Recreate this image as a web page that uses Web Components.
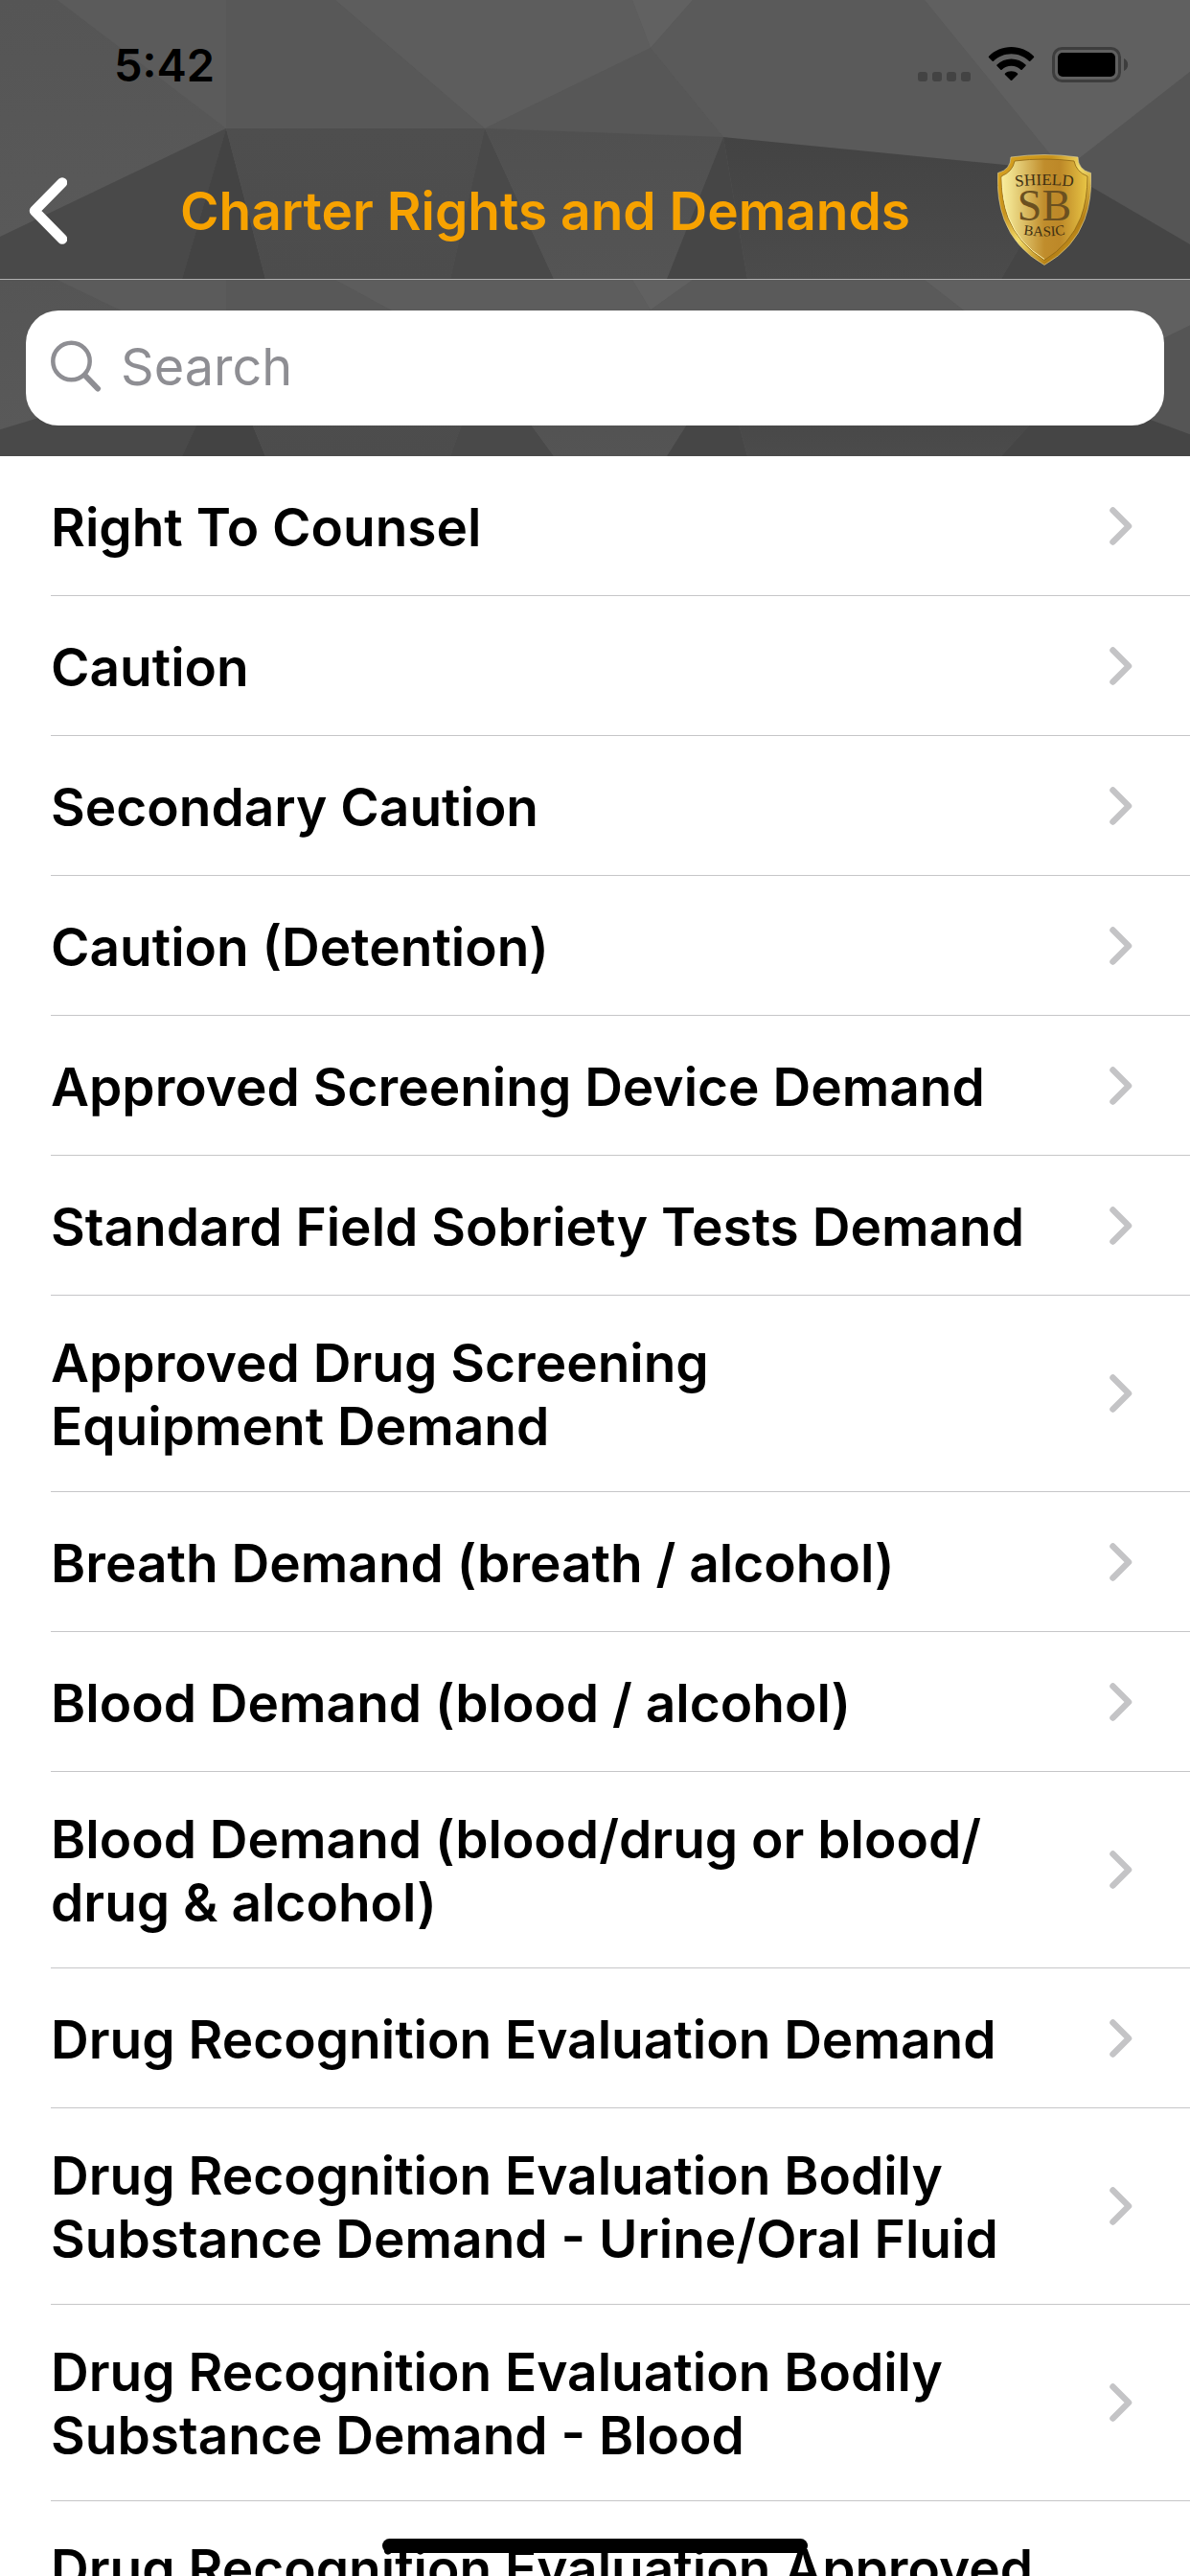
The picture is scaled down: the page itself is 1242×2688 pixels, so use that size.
<!DOCTYPE html>
<html lang="en">
<head>
<meta charset="utf-8">
<meta name="viewport" content="width=device-width, initial-scale=1">
<title>Charter Rights and Demands</title>
<style>
    html, body {
        margin: 0;
        height: 100%;
    }
    body {
        background: #fff;
        color: #000;
        font-family: Inter, "Liberation Sans", sans-serif;
        overflow: hidden;
        --accent: #f7a200;
        --grey: #8e8e93;
        --line: #c6c6c8;
        --text-size: 55px;
    }
</style>
</head>
<body>

<app-screen>
    <status-bar slot="header" time="5:42"></status-bar>
    <nav-bar slot="header">Charter Rights and Demands</nav-bar>
    <search-bar slot="search"></search-bar>
    <demand-list></demand-list>
</app-screen>

<script>
// --- Data ---
// A newline marks where a long title wraps
const DEMANDS = [
    'Right To Counsel',
    'Caution',
    'Secondary Caution',
    'Caution (Detention)',
    'Approved Screening Device Demand',
    'Standard Field Sobriety Tests Demand',
    'Approved Drug Screening\nEquipment Demand',
    'Breath Demand (breath / alcohol)',
    'Blood Demand (blood / alcohol)',
    'Blood Demand (blood/drug or blood/\ndrug & alcohol)',
    'Drug Recognition Evaluation Demand',
    'Drug Recognition Evaluation Bodily\nSubstance Demand - Urine/Oral Fluid',
    'Drug Recognition Evaluation Bodily\nSubstance Demand - Blood',
    'Drug Recognition Evaluation Approved\n\u00a0'
];

// --- Web Component: PolyPanel (faceted grey panel behind its content) ---
class PolyPanel extends HTMLElement {
    constructor() {
        super();
        this.attachShadow({ mode: 'open' });
    }

    connectedCallback() {
        this.shadowRoot.innerHTML = `
            <style>
                :host {
                    display: block;
                    position: relative;
                    background: #585858;
                }
                svg {
                    position: absolute;
                    inset: 0;
                    width: 100%;
                    height: 100%;
                }
                .content {
                    position: relative;
                }
            </style>
            <svg viewBox="0 0 1242 291" preserveAspectRatio="none" aria-hidden="true">
                <defs>
                    <linearGradient id="left" x1="0" y1="0" x2="0" y2="1">
                        <stop offset="0" stop-color="#555"/>
                        <stop offset="1" stop-color="#595959"/>
                    </linearGradient>
                    <linearGradient id="low" x1="0" y1="0" x2="0" y2="1">
                        <stop offset="0" stop-color="#4e4e4e"/>
                        <stop offset="1" stop-color="#4c4c4c"/>
                    </linearGradient>
                    <linearGradient id="mid" x1="0" y1="0" x2="0" y2="1">
                        <stop offset="0" stop-color="#505050"/>
                        <stop offset="1" stop-color="#545454"/>
                    </linearGradient>
                    <linearGradient id="right" x1="0" y1="0" x2="0" y2="1">
                        <stop offset="0" stop-color="#434343"/>
                        <stop offset="1" stop-color="#4b4b4b"/>
                    </linearGradient>
                </defs>
                <path fill="url(#left)" d="M0 0H60L236 134 0 247z"/>
                <path fill="#5b5b5b" d="M60 0H236V134z"/>
                <path fill="#585858" d="M236 0H350L506 134H236z"/>
                <path fill="#5d5d5d" d="M350 0H660L679 50 506 134z"/>
                <path fill="#616161" d="M660 0H723L679 50z"/>
                <path fill="#575757" d="M506 134 679 50 755 143z"/>
                <path fill="#5a5a5a" d="M723 0H965L1110 178 755 143 679 50z"/>
                <path fill="#606060" d="M965 0H1242V75L1110 178z"/>
                <path fill="#555" d="M1242 75V255L1110 178z"/>
                <path fill="#494949" d="M0 247 236 134 190 291H0z"/>
                <path fill="#434343" d="M236 134 277 291H190z"/>
                <path fill="url(#low)" d="M236 134H506L470 291H277z"/>
                <path fill="#494949" d="M506 134 578 291H470z"/>
                <path fill="url(#mid)" d="M506 134 755 143 696 291H578z"/>
                <path fill="#464646" d="M755 143 780 291H696z"/>
                <path fill="url(#right)" d="M755 143 1110 178 1045 291H780z"/>
                <path fill="#454545" d="M1110 178 1242 255V291H1045z"/>
            </svg>
            <div class="content"><slot></slot></div>
        `;
    }
}

// --- Web Component: AppScreen ---
class AppScreen extends HTMLElement {
    constructor() {
        super();
        this.attachShadow({ mode: 'open' });
    }

    connectedCallback() {
        this.shadowRoot.innerHTML = `
            <style>
                :host {
                    display: flex;
                    flex-direction: column;
                    height: 100vh;
                    overflow: hidden;
                }
                poly-panel {
                    flex: none;
                }
                .nav {
                    border-bottom: 1px solid #b0b0b0;
                }
                main {
                    flex: 1;
                    min-height: 0;
                    overflow: hidden;
                }
                .home {
                    position: fixed;
                    left: 50%;
                    bottom: 24px;
                    width: 444px;
                    height: 15px;
                    margin-left: -222px;
                    border-radius: 8px;
                    background: #000;
                }
            </style>
            <poly-panel class="nav"><slot name="header"></slot></poly-panel>
            <poly-panel><slot name="search"></slot></poly-panel>
            <main><slot></slot></main>
            <div class="home"></div>
        `;
    }
}

// --- Web Component: StatusBar ---
class StatusBar extends HTMLElement {
    constructor() {
        super();
        this.attachShadow({ mode: 'open' });
    }

    connectedCallback() {
        this.shadowRoot.innerHTML = `
            <style>
                :host {
                    display: flex;
                    align-items: center;
                    justify-content: space-between;
                    height: 136px;
                    padding: 0 64px 0 119px;
                }
                time {
                    font-size: 47px;
                    line-height: 56px;
                    font-weight: 600;
                }
                svg {
                    display: block;
                }
            </style>
            <time>${this.getAttribute('time')}</time>
            <svg width="220" height="38" viewBox="0 0 220 38" aria-hidden="true">
                <g fill="#434343">
                    <rect x="0" y="26" width="10" height="10" rx="3"/>
                    <rect x="15" y="26" width="10" height="10" rx="3"/>
                    <rect x="30" y="26" width="10" height="10" rx="3"/>
                    <rect x="45" y="26" width="10" height="10" rx="3"/>
                </g>
                <g transform="translate(74 0)">
                    <path d="M23.500 0C14.500 0 6 3.500 0 9.800q-.6.700 0 1.300L3.700 14.800q.6.600 1.300 0C10 10 16.500 7.300 23.500 7.300S37 10 42 14.800q.7.600 1.300 0L47 11.100q.6-.6 0-1.300C41 3.500 32.500 0 23.500 0z"/>
                    <path d="M23.500 12.500c-5.700 0-11 2.200-15 6q-.7.700 0 1.300l3.800 3.900q.7.600 1.300 0c2.700-2.500 6.200-3.900 9.900-3.900s7.200 1.400 9.900 3.900q.6.600 1.300 0l3.800-3.900q.7-.6 0-1.300c-4-3.800-9.300-6-15-6z"/>
                    <path d="M23.500 25.200c-2.500 0-4.700.9-6.500 2.300q-.7.700 0 1.400l5.800 5.800q.7.700 1.400 0l5.800-5.800q.7-.7 0-1.400c-1.800-1.400-4-2.300-6.500-2.300z"/>
                </g>
                <rect x="141.500" y="1.500" width="69" height="34" rx="9" fill="none" stroke="#3d3d3d" stroke-width="3"/>
                <rect x="146" y="6" width="60" height="25" rx="5"/>
                <path fill="#3d3d3d" d="M215 12c2.500 1 4.200 3.500 4.200 6.500s-1.700 5.500-4.200 6.500z"/>
            </svg>
        `;
    }
}

// --- Web Component: ShieldLogo ---
class ShieldLogo extends HTMLElement {
    constructor() {
        super();
        this.attachShadow({ mode: 'open' });
    }

    connectedCallback() {
        this.shadowRoot.innerHTML = `
            <style>
                :host {
                    display: block;
                    width: 98px;
                    height: 118px;
                }
                svg {
                    display: block;
                }
                text {
                    font-family: "Liberation Serif", serif;
                    fill: #3f3012;
                    text-anchor: middle;
                }
                .initials {
                    fill: #6b5020;
                }
            </style>
            <svg width="98" height="116" viewBox="0 0 98 116" role="img" aria-label="Shield Basic">
                <defs>
                    <linearGradient id="rim" x1="0" y1="0" x2="1" y2="1">
                        <stop offset="0" stop-color="#d9a520"/>
                        <stop offset=".3" stop-color="#c8921c"/>
                        <stop offset=".5" stop-color="#f3dc6a"/>
                        <stop offset=".75" stop-color="#b57f14"/>
                        <stop offset="1" stop-color="#e9c53f"/>
                    </linearGradient>
                    <linearGradient id="face" x1="0" y1="0" x2="1" y2="0">
                        <stop offset="0" stop-color="#f9ee9c"/>
                        <stop offset=".12" stop-color="#eddc88"/>
                        <stop offset=".5" stop-color="#c08d2c"/>
                        <stop offset=".68" stop-color="#bd8828"/>
                        <stop offset="1" stop-color="#e8c545"/>
                    </linearGradient>
                    <path id="arcTop" d="M10 35Q49 29 88 35"/>
                    <path id="arcBottom" d="M19 82Q49 89 79 82"/>
                </defs>
                <path fill="url(#rim)" stroke="#e6d9a0" stroke-width=".6" d="M14 3Q49-2 84 3Q84 16 97.500 19.500Q99 46 91 68Q80 98 49 115.500Q18 98 7 68Q-1 46 .5 19.500Q14 16 14 3z"/>
                <path fill="url(#face)" stroke="#8d6514" stroke-width=".8" d="M18 7Q49 3 80 7Q82 18 94 23Q94 47 87 66Q76 94 49 110.500Q22 94 11 66Q4 47 4 23Q16 18 18 7z"/>
                <path fill="none" stroke="#fbf0a8" stroke-width="1" d="M5 24Q5 47 12 66Q22 93 49 109.500"/>
                <text font-size="17"><textPath href="#arcTop" startOffset="50%">SHIELD</textPath></text>
                <text class="initials" x="49" y="69" font-size="46">SB</text>
                <text font-size="15"><textPath href="#arcBottom" startOffset="50%">BASIC</textPath></text>
            </svg>
        `;
    }
}

// --- Web Component: NavBar ---
class NavBar extends HTMLElement {
    constructor() {
        super();
        this.attachShadow({ mode: 'open' });
    }

    connectedCallback() {
        this.shadowRoot.innerHTML = `
            <style>
                :host {
                    display: flex;
                    align-items: center;
                    height: 143px;
                    padding: 12px 103px 0 0;
                }
                button {
                    width: 97px;
                    height: 120px;
                    padding: 0 0 0 30px;
                    border: 0;
                    background: none;
                    cursor: pointer;
                }
                svg {
                    display: block;
                }
                h1 {
                    flex: 1;
                    margin: 0;
                    color: var(--accent);
                    font-size: var(--text-size);
                    line-height: 66px;
                    font-weight: 600;
                    text-align: center;
                    white-space: nowrap;
                }
            </style>
            <button type="button" aria-label="Back">
                <svg width="40" height="70" viewBox="0 0 40 70">
                    <path d="M35 5.500 6 35 35 64.500" fill="none" stroke="#fff" stroke-width="10.500" stroke-linecap="round" stroke-linejoin="round"/>
                </svg>
            </button>
            <h1><slot></slot></h1>
            <shield-logo></shield-logo>
        `;
    }
}

// --- Web Component: SearchBar ---
class SearchBar extends HTMLElement {
    constructor() {
        super();
        this.attachShadow({ mode: 'open' });
    }

    connectedCallback() {
        this.shadowRoot.innerHTML = `
            <style>
                :host {
                    display: block;
                    padding: 32px 27px;
                }
                label {
                    display: flex;
                    align-items: center;
                    gap: 20px;
                    box-sizing: border-box;
                    height: 120px;
                    padding: 0 26px 4px;
                    border-radius: 34px;
                    background: #fff;
                }
                svg {
                    flex: none;
                }
                input {
                    flex: 1;
                    min-width: 0;
                    height: 80px;
                    padding: 0;
                    border: 0;
                    outline: none;
                    background: none;
                    color: #000;
                    font-family: inherit;
                    font-size: 54px;
                }
                input::placeholder {
                    color: var(--grey);
                    opacity: 1;
                }
            </style>
            <label>
                <svg width="53" height="54" viewBox="0 0 53 54" aria-hidden="true">
                    <g fill="none" stroke="#8e8e93" stroke-linecap="round">
                        <circle cx="21.500" cy="22" r="19.200" stroke-width="4.500"/>
                        <path d="M36 37 49 50.500" stroke-width="6"/>
                    </g>
                </svg>
                <input type="text" placeholder="Search" aria-label="Search">
            </label>
        `;
    }
}

// --- Web Component: DemandRow ---
class DemandRow extends HTMLElement {
    constructor() {
        super();
        this.attachShadow({ mode: 'open' });
    }

    connectedCallback() {
        this.shadowRoot.innerHTML = `
            <style>
                :host {
                    display: block;
                    padding-left: 53px;
                }
                a {
                    display: flex;
                    align-items: center;
                    gap: 60px;
                    box-sizing: border-box;
                    min-height: 146px;
                    padding: 35px 60px 35px 0;
                    border-bottom: 1px solid var(--line);
                    color: inherit;
                    text-decoration: none;
                }
                span {
                    flex: 1;
                    padding-top: 2px;
                    font-size: var(--text-size);
                    line-height: 66px;
                    font-weight: 600;
                    white-space: pre-line;
                }
                svg {
                    flex: none;
                }
            </style>
            <a href="#">
                <span><slot></slot></span>
                <svg width="24" height="40" viewBox="0 0 24 40" aria-hidden="true">
                    <path d="M3.500 3.500 20 20 3.500 36.500" fill="none" stroke="#c4c4c6" stroke-width="6.500" stroke-linecap="round" stroke-linejoin="round"/>
                </svg>
            </a>
        `;
    }
}

// --- Web Component: DemandList ---
class DemandList extends HTMLElement {
    constructor() {
        super();
        this.attachShadow({ mode: 'open' });
    }

    connectedCallback() {
        this.shadowRoot.innerHTML = `
            <style>
                :host {
                    display: block;
                }
            </style>
        `;
        DEMANDS.forEach(title => {
            const row = document.createElement('demand-row');
            row.textContent = title;
            this.shadowRoot.appendChild(row);
        });
    }
}

// Define Custom Elements
customElements.define('poly-panel', PolyPanel);
customElements.define('shield-logo', ShieldLogo);
customElements.define('status-bar', StatusBar);
customElements.define('nav-bar', NavBar);
customElements.define('search-bar', SearchBar);
customElements.define('demand-row', DemandRow);
customElements.define('demand-list', DemandList);
customElements.define('app-screen', AppScreen);
</script>
</body>
</html>
